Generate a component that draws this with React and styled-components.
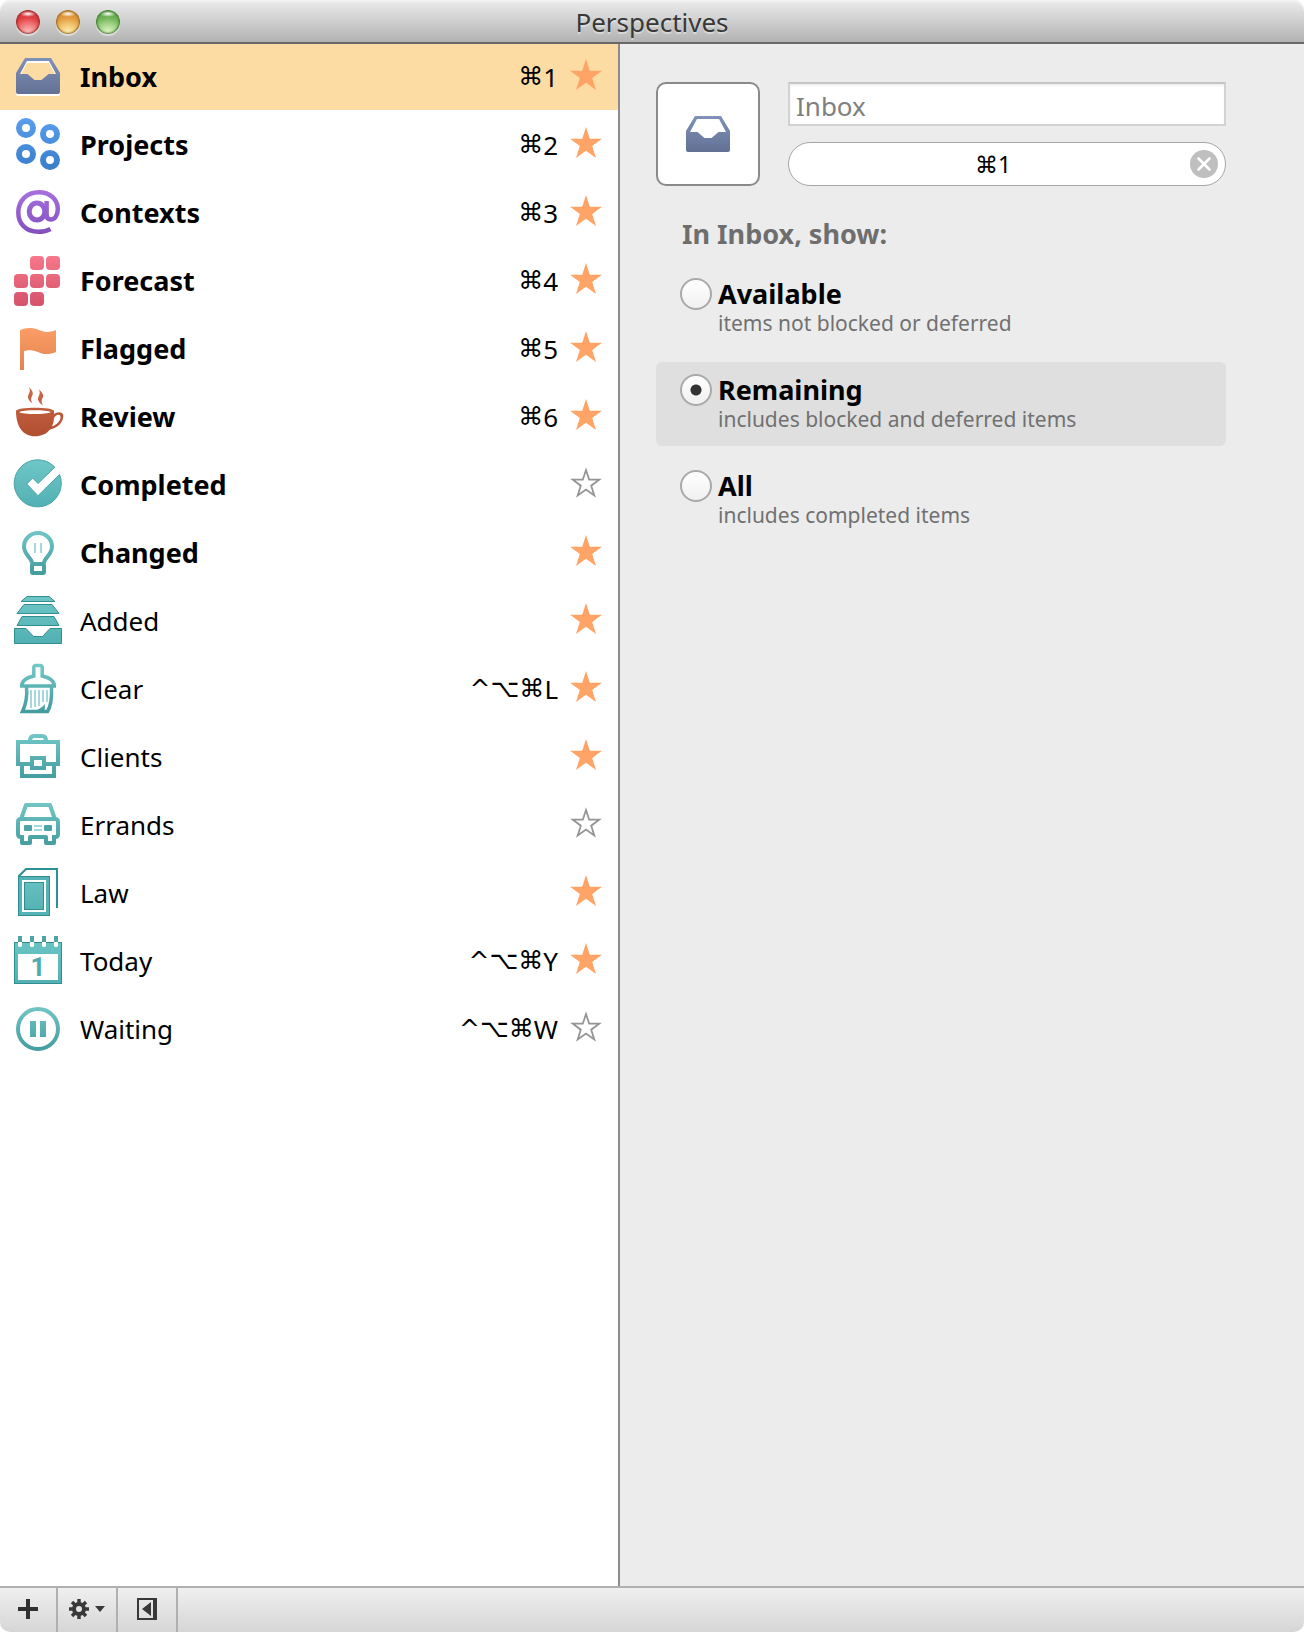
import React, { useState } from "react";
import styled, { createGlobalStyle } from "styled-components";

const TEAL = "url(#teal)";

const DayNumber = styled.text`
  fill: #4fabac;
  font-family: Roboto, sans-serif;
  font-size: 26px;
  font-weight: 700;
`;

const Gradient = ({ id, from, to }) => (
  <linearGradient
    id={id}
    gradientUnits="userSpaceOnUse"
    x1="0"
    y1="0"
    x2="0"
    y2="48"
  >
    <stop offset="0" stopColor={from} />
    <stop offset="1" stopColor={to} />
  </linearGradient>
);

const Gradients = () => (
  <HiddenSvg aria-hidden="true">
    <defs>
      <Gradient id="slate" from="#8497bf" to="#5e6b8e" />
      <Gradient id="blue" from="#579dec" to="#397fcd" />
      <Gradient id="purple" from="#a871df" to="#814dbd" />
      <Gradient id="pink" from="#f67789" to="#d6546c" />
      <Gradient id="orange" from="#ffa069" to="#e0824e" />
      <Gradient id="brown" from="#cb6647" to="#ae4c2f" />
      <Gradient id="teal" from="#74c8c8" to="#429b9d" />
      <Gradient id="tealFlat" from="#6fc6c6" to="#52b0b2" />
    </defs>
  </HiddenSvg>
);

const icons = {
  inbox: (
    <path
      fill="url(#slate)"
      fillRule="evenodd"
      d="M11 6H37L46 21V40Q46 42 44 42H4Q2 42 2 40V21ZM13 9L6 22H13.5L20.5 28H27.5L34.5 22H42L35 9Z"
    />
  ),
  projects: (
    <g fill="none" stroke="url(#blue)" strokeWidth="6">
      <circle cx="12" cy="8" r="7" />
      <circle cx="36" cy="14" r="7" />
      <circle cx="12" cy="34" r="7" />
      <circle cx="36" cy="40" r="7" />
    </g>
  ),
  contexts: (
    <g fill="none" stroke="url(#purple)">
      <path
        strokeWidth="4.5"
        d="M36.5 41C33 43 29 43.8 24.5 43.8C12 43.8 4.3 36 4.3 24.5C4.3 12.5 13 4.2 24.8 4.2C36 4.2 43.8 11.5 43.8 21C43.8 27.5 40.5 31.5 36.8 31.5C34 31.5 32.6 30 32.6 27V13"
      />
      <ellipse strokeWidth="5" cx="23" cy="23.5" rx="7.8" ry="8.5" />
    </g>
  ),
  forecast: (
    <g fill="url(#pink)">
      <rect x="16" y="0" width="14" height="14" rx="4" />
      <rect x="32" y="0" width="14" height="14" rx="4" />
      <rect x="0" y="18" width="14" height="14" rx="4" />
      <rect x="16" y="18" width="14" height="14" rx="4" />
      <rect x="32" y="18" width="14" height="14" rx="4" />
      <rect x="0" y="36" width="14" height="14" rx="4" />
      <rect x="16" y="36" width="14" height="14" rx="4" />
    </g>
  ),
  flagged: (
    <path
      fill="url(#orange)"
      d="M6 6C10 4.5 14 3.5 19 4.2C25 5.2 28 8 33 8C37 8 40 6.8 42 6V28C39 29.5 36 30 32 30C26 29.8 23 26.8 18 26.4C15 26.2 12 26.5 10 27V46H6Z"
    />
  ),
  review: (
    <g fill="url(#brown)">
      <path d="M15 -5C18 -2 20 1 18 4C16.5 7 17 9 18.5 11.5C14 8 13 5 14.8 2C16.3 -1 16 -2.5 15 -5Z" />
      <path d="M24.5 -3C28 0 30.5 3 28.5 6C27 9 27.5 11 29 13.5C24 10 23 7 24.8 4C26.3 1 26 -.5 24.5 -3Z" />
      <path
        fillRule="evenodd"
        d="M2 19C2 14.5 40 14.5 40 19V22C43 19.5 49.5 19 49.3 24.5C49 31 43 36 36 37.5C32.5 42 27 44.3 21 44.3C9 44.3 2 34.5 2 19ZM5 20C9 22.8 33 22.8 37 20C33 17.6 9 17.6 5 20ZM40 26C39.8 29.5 39 32 38 34.5C43 32.5 46.5 29 46.5 25C46.5 22 42.5 22 40 26Z"
      />
    </g>
  ),
  completed: (
    <path
      fill="url(#tealFlat)"
      stroke="#45a3a5"
      d="M40.8 7.2A23.5 23.5 0 1 0 45.5 14.5L24 35.7L12.7 24L18.7 18L24 23.5Z"
    />
  ),
  changed: (
    <g>
      <g fill="none" stroke={TEAL} strokeWidth="4">
        <path d="M18 35C18 30 10 27 10 18.5A14 13.5 0 0 1 38 18.5C38 27 30 30 30 35" />
        <rect x="18" y="36" width="12" height="9" rx="1" />
      </g>
      <path stroke="#a5d8d8" strokeWidth="2" d="M21 15V25M27 15V25" />
    </g>
  ),
  added: (
    <g fill="url(#tealFlat)" stroke="#318e90">
      <path d="M13 .5H35L41 5.5H7Z" />
      <path d="M10 8.5H38L45 17.5H3Z" />
      <path d="M8 20.5H40L45 29.5H3Z" />
      <path d="M.5 32.5H12L19.5 40.5H28.5L36 32.5H47.5V47.5H.5Z" />
    </g>
  ),
  clear: (
    <g>
      <g fill="none" stroke={TEAL} strokeWidth="3.5">
        <path d="M19.8 12V3.5Q19.8 1.5 22 1.5H26Q28.2 1.5 28.2 3.5V12C35 13.5 40.3 17 40.3 22H7.7C7.7 17 13 13.5 19.8 12Z" />
        <path d="M12.5 22C13.5 32 12 40 8.5 47.5H33.5C37.5 41 38 32 37.5 22" />
      </g>
      <path fill={TEAL} d="M20 48L28 43L31 40L30.500 48Z" />
      <path
        stroke="#a5d8d8"
        strokeWidth="2"
        d="M17 26V44M21 26V43M25 26V42M29 26V38M33 26V38"
      />
    </g>
  ),
  clients: (
    <g fill="none" stroke={TEAL} strokeWidth="4">
      <path d="M16 9Q16 4 20 4H28Q32 4 32 9" />
      <path d="M16 32H4V10H44V32H32" />
      <path d="M8 32V44H40V32" />
      <rect x="18" y="26" width="12" height="10" />
    </g>
  ),
  errands: (
    <g>
      <g fill="none" stroke={TEAL} strokeWidth="4" strokeLinejoin="round">
        <path d="M7.5 18L12 5H36L40.5 18" />
        <path d="M8 37H7Q4 37 4 34V22Q4 19 7 19H41Q44 19 44 22V34Q44 37 41 37H40" />
        <path d="M8 35V43H16V37H32V43H40V35" />
      </g>
      <rect x="10" y="25" width="8" height="6" rx="1" fill="#4ca6a8" />
      <rect x="30" y="25" width="8" height="6" rx="1" fill="#4ca6a8" />
      <path stroke="#a5d8d8" strokeWidth="2" d="M20 26H28M20 30H28" />
    </g>
  ),
  law: (
    <g>
      <path fill="none" stroke="#2d8f93" strokeWidth="2" d="M5 9V8L12 1H43V40" />
      <rect x="4.5" y="8.5" width="31" height="39" fill="#55b3b5" stroke="#318e90" />
      <rect x="9" y="13" width="22" height="30" fill="none" stroke="#fff" strokeWidth="2" />
      <rect x="10.5" y="14.5" width="19" height="27" fill="url(#tealFlat)" stroke="#318e90" />
    </g>
  ),
  today: (
    <g>
      <rect x=".5" y="6.5" width="47" height="41" fill="url(#tealFlat)" stroke="#318e90" />
      <rect x="4" y="18" width="40" height="26" fill="#fff" />
      <path fill="#4fa3a5" d="M4 0h4v6h-4zM16 0h4v6h-4zM28 0h4v6h-4zM40 0h4v6h-4z" />
      <path
        fill="#fff"
        d="M4 6h4v4l-1 1h-2l-1-1zM16 6h4v4l-1 1h-2l-1-1zM28 6h4v4l-1 1h-2l-1-1zM40 6h4v4l-1 1h-2l-1-1z"
      />
      <DayNumber x="24" y="40" textAnchor="middle">
        1
      </DayNumber>
    </g>
  ),
  waiting: (
    <g>
      <circle cx="24" cy="25" r="20" fill="none" stroke={TEAL} strokeWidth="4" />
      <path fill={TEAL} d="M16 17h6v16h-6zM26 17h6v16h-6z" />
    </g>
  ),
};

const perspectives = [
  { name: "Inbox", icon: "inbox", keys: "⌘", letter: "1", builtIn: true, starred: true },
  { name: "Projects", icon: "projects", keys: "⌘", letter: "2", builtIn: true, starred: true },
  { name: "Contexts", icon: "contexts", keys: "⌘", letter: "3", builtIn: true, starred: true },
  { name: "Forecast", icon: "forecast", keys: "⌘", letter: "4", builtIn: true, starred: true },
  { name: "Flagged", icon: "flagged", keys: "⌘", letter: "5", builtIn: true, starred: true },
  { name: "Review", icon: "review", keys: "⌘", letter: "6", builtIn: true, starred: true },
  { name: "Completed", icon: "completed", builtIn: true, starred: false },
  { name: "Changed", icon: "changed", builtIn: true, starred: true },
  { name: "Added", icon: "added", starred: true },
  { name: "Clear", icon: "clear", keys: "^⌥⌘", letter: "L", starred: true },
  { name: "Clients", icon: "clients", starred: true },
  { name: "Errands", icon: "errands", starred: false },
  { name: "Law", icon: "law", starred: true },
  { name: "Today", icon: "today", keys: "^⌥⌘", letter: "Y", starred: true },
  { name: "Waiting", icon: "waiting", keys: "^⌥⌘", letter: "W", starred: false },
];

const filters = [
  { id: "available", label: "Available", hint: "items not blocked or deferred" },
  { id: "remaining", label: "Remaining", hint: "includes blocked and deferred items" },
  { id: "all", label: "All", hint: "includes completed items" },
];

const Star = ({ filled }) => (
  <svg width="32" height="32" viewBox="0 0 32 32" aria-hidden="true">
    {filled ? (
      <path
        fill="#ffa366"
        d="M16 0L19.8 11.8H32L22.2 19L26 31L16 23.8L6 31L9.8 19L0 11.8H12.2Z"
      />
    ) : (
      <path
        fill="none"
        stroke="#949494"
        strokeWidth="1.8"
        d="M16 3L19.2 12.7H29.2L21.2 18.7L24.3 28.5L16 22.6L7.7 28.5L10.8 18.7L2.8 12.7H12.8Z"
      />
    )}
  </svg>
);

const Icon = ({ name }) => (
  <IconSvg viewBox="0 0 48 48" $halo={name === "inbox"} aria-hidden="true">
    {icons[name]}
  </IconSvg>
);

const App = () => {
  const [items, setItems] = useState(perspectives);
  const [selected, setSelected] = useState("Inbox");
  const [filter, setFilter] = useState("remaining");
  const current = items.find(({ name }) => name === selected);

  const toggleStar = (name) =>
    setItems(
      items.map((item) =>
        item.name === name ? { ...item, starred: !item.starred } : item
      )
    );

  const clearShortcut = () =>
    setItems(
      items.map((item) =>
        item.name === selected ? { ...item, keys: "", letter: "" } : item
      )
    );

  return (
    <Window>
      <GlobalStyle />
      <Gradients />
      <TitleBar>
        <Lights>
          <Light $rim="#8c2a2a" $top="#d8383c" $mid="#ee4c4c" $glow="#ffc4c4" aria-label="Close" />
          <Light $rim="#8f6420" $top="#d98f35" $mid="#f0ae4b" $glow="#fff2b0" aria-label="Minimize" />
          <Light $rim="#3f702c" $top="#62a84a" $mid="#86c868" $glow="#e2f8c8" aria-label="Zoom" />
        </Lights>
        <Title>Perspectives</Title>
      </TitleBar>

      <Content>
        <List>
          {items.map(({ name, icon, keys, letter, builtIn, starred }) => (
            <Row key={name} $selected={name === selected}>
              <RowButton onClick={() => setSelected(name)}>
                <Icon name={icon} />
                <Name $bold={builtIn}>{name}</Name>
                {letter && (
                  <Shortcut>
                    <Modifiers>{keys}</Modifiers>
                    {letter}
                  </Shortcut>
                )}
              </RowButton>
              <StarButton
                aria-label={`Favorite ${name}`}
                aria-pressed={starred}
                onClick={() => toggleStar(name)}
              >
                <Star filled={starred} />
              </StarButton>
            </Row>
          ))}
        </List>

        <Inspector>
          <Header>
            <Tile aria-label="Choose icon">
              <Icon name={current.icon} />
            </Tile>
            <Fields>
              <NameInput
                aria-label="Name"
                placeholder={selected}
                disabled={current.builtIn}
              />
              <ShortcutField>
                <ShortcutInput
                  aria-label="Keyboard shortcut"
                  value={`${current.keys || ""}${current.letter || ""}`}
                  readOnly
                />
                <ClearButton aria-label="Clear shortcut" onClick={clearShortcut}>
                  <svg width="28" height="28" viewBox="0 0 28 28">
                    <circle cx="14" cy="14" r="14" fill="#bfbfbf" />
                    <path
                      stroke="#fff"
                      strokeWidth="2.6"
                      strokeLinecap="round"
                      d="M8.5 8.5L19.5 19.5M19.5 8.5L8.5 19.5"
                    />
                  </svg>
                </ClearButton>
              </ShortcutField>
            </Fields>
          </Header>

          <Heading>In {selected}, show:</Heading>
          <Options>
            {filters.map(({ id, label, hint }) => (
              <Option key={id} $selected={id === filter}>
                <Radio
                  type="radio"
                  name="filter"
                  checked={id === filter}
                  onChange={() => setFilter(id)}
                />
                <OptionText>
                  <OptionLabel>{label}</OptionLabel>
                  <Hint>{hint}</Hint>
                </OptionText>
              </Option>
            ))}
          </Options>
        </Inspector>
      </Content>

      <Footer>
        <Tool $first aria-label="Add perspective">
          <svg width="20" height="20" viewBox="0 0 20 20">
            <path fill="#303030" d="M8 0h4v8h8v4h-8v8h-4v-8h-8v-4h8z" />
          </svg>
        </Tool>
        <Tool aria-label="Actions">
          <svg width="20" height="20" viewBox="0 0 20 20">
            <g fill="none" stroke="#383838">
              <circle cx="10" cy="10" r="5" strokeWidth="4" />
              <path
                strokeWidth="3.4"
                d="M10 0V4M10 16V20M0 10H4M16 10H20M3 3L6 6M14 14L17 17M17 3L14 6M6 14L3 17"
              />
            </g>
          </svg>
          <svg width="10" height="6" viewBox="0 0 10 6">
            <path fill="#383838" d="M0 0H10L5 6Z" />
          </svg>
        </Tool>
        <Tool aria-label="Hide inspector">
          <svg width="20" height="22" viewBox="0 0 20 22">
            <path
              fill="#383838"
              fillRule="evenodd"
              d="M0 0H20V22H0ZM2 2V20H16V2ZM14 4V18L5 11Z"
            />
          </svg>
        </Tool>
      </Footer>
    </Window>
  );
};

export default App;

const GlobalStyle = createGlobalStyle`
  * {
    box-sizing: border-box;
  }
  body {
    margin: 0;
    background: #fff;
    color: #000;
    font-family: "Noto Sans", "DejaVu Sans", sans-serif;
    font-size: 26px;
    line-height: 32px;
  }
  button, input {
    margin: 0;
    padding: 0;
    border: 0;
    background: none;
    color: inherit;
    font: inherit;
  }
`;

const HiddenSvg = styled.svg`
  position: absolute;
  width: 0;
  height: 0;
`;

const Window = styled.div`
  display: flex;
  flex-direction: column;
  min-height: 100vh;
`;

const TitleBar = styled.header`
  display: grid;
  grid-template-columns: 1fr auto 1fr;
  align-items: center;
  height: 44px;
  padding: 2px 16px 0;
  border-bottom: 2px solid #686868;
  border-radius: 10px 10px 0 0;
  background: linear-gradient(#ececec, #b2b2b2);
  box-shadow: inset 0 2px 0 #f2f2f2;
`;

const Lights = styled.div`
  display: flex;
  gap: 16px;
`;

const Light = styled.button`
  width: 24px;
  height: 24px;
  border-radius: 50%;
  background: radial-gradient(ellipse 8px 3px at 50% 16%, #fff, transparent),
    radial-gradient(circle at 50% 95%, ${(props) => props.$glow}, transparent 60%),
    linear-gradient(${(props) => props.$top}, ${(props) => props.$mid});
  box-shadow: inset 0 0 2px 1px ${(props) => props.$rim},
    0 2px 1px rgba(255, 255, 255, 0.5);
`;

const Title = styled.h1`
  margin: 0;
  color: #383838;
  font-size: 26px;
  font-weight: 400;
  text-shadow: 0 2px 0 rgba(255, 255, 255, 0.4);
`;

const Content = styled.main`
  display: flex;
  flex: 1;
`;

const List = styled.ul`
  display: flex;
  flex: 0 0 620px;
  flex-direction: column;
  gap: 2px;
  margin: 0;
  padding: 0;
  border-right: 2px solid #8c8c8c;
  background: #fff;
  list-style: none;
`;

const Row = styled.li`
  display: flex;
  height: 66px;
  padding-right: 16px;
  background: ${(props) => (props.$selected ? "#fddca3" : "transparent")};
`;

const IconSvg = styled.svg`
  flex: none;
  width: 48px;
  height: 48px;
  overflow: visible;
  filter: ${(props) => (props.$halo ? "drop-shadow(0 2px 0 #fff)" : "none")};
`;

const RowButton = styled.button`
  display: flex;
  flex: 1;
  align-items: center;
  gap: 18px;
  padding: 0 12px 0 14px;
  text-align: left;
  ${IconSvg} {
    margin-bottom: 2px;
  }
`;

const Name = styled.span`
  flex: 1;
  font-size: ${(props) => (props.$bold ? 27 : 26)}px;
  font-weight: ${(props) => (props.$bold ? 700 : 400)};
`;

const Shortcut = styled.span`
  display: flex;
`;

const Modifiers = styled.span`
  font-family: "DejaVu Sans", sans-serif;
  font-size: 25px;
`;

const StarButton = styled.button`
  display: flex;
  align-items: center;
  padding-bottom: 4px;
`;

const Inspector = styled.section`
  flex: 1;
  padding: 38px 78px 38px 36px;
  background: #ececec;
`;

const Header = styled.div`
  display: flex;
  gap: 28px;
`;

const Tile = styled.button`
  display: flex;
  align-items: center;
  justify-content: center;
  width: 104px;
  height: 104px;
  border: 2px solid #8a8a8a;
  border-radius: 10px;
  background: #fff;
`;

const Fields = styled.div`
  display: flex;
  flex: 1;
  flex-direction: column;
  gap: 16px;
`;

const NameInput = styled.input`
  width: 100%;
  height: 44px;
  padding: 4px 6px 0;
  border: 2px solid #d2d2d2;
  border-top-color: #c4c4c4;
  background: #fff;
  box-shadow: inset 0 2px 2px #f0f0f0;
  &::placeholder {
    color: #808080;
    opacity: 1;
  }
`;

const ShortcutField = styled.div`
  display: flex;
  align-items: center;
  height: 44px;
  padding: 0 7px;
  border: 1px solid #a6a6a6;
  border-radius: 22px;
  background: #fff;
`;

const ShortcutInput = styled.input`
  flex: 1;
  min-width: 0;
  font-size: 23px;
  text-align: center;
`;

const ClearButton = styled.button`
  display: flex;
`;

const Heading = styled.h2`
  margin: 32px 0 16px 26px;
  color: #6e6e6e;
  font-size: 27px;
  font-weight: 700;
`;

const Options = styled.div`
  display: flex;
  flex-direction: column;
  gap: 12px;
`;

const Option = styled.label`
  display: flex;
  gap: 6px;
  height: 84px;
  padding: 12px 24px;
  border-radius: 6px;
  background: ${(props) => (props.$selected ? "#dfdfdf" : "transparent")};
`;

const Radio = styled.input`
  flex: none;
  width: 32px;
  height: 32px;
  border: 2px solid #a9a9a9;
  border-radius: 50%;
  appearance: none;
  background: linear-gradient(#fff, #f0f0f0);
  &:checked {
    background: radial-gradient(circle, #333 5px, transparent 6px),
      linear-gradient(#fff, #f0f0f0);
  }
`;

const OptionText = styled.span`
  display: flex;
  flex-direction: column;
`;

const OptionLabel = styled.span`
  font-size: 27px;
  font-weight: 700;
`;

const Hint = styled.span`
  color: #717171;
  font-size: 21px;
  line-height: 26px;
`;

const Footer = styled.footer`
  display: flex;
  height: 46px;
  border-top: 2px solid #b0b0b0;
  border-radius: 0 0 10px 10px;
  background: linear-gradient(#efefef, #d6d6d6);
`;

const Tool = styled.button`
  display: flex;
  align-items: center;
  justify-content: center;
  gap: 6px;
  width: ${(props) => (props.$first ? 58 : 60)}px;
  padding-bottom: 2px;
  border-right: 2px solid #b0b0b0;
`;
